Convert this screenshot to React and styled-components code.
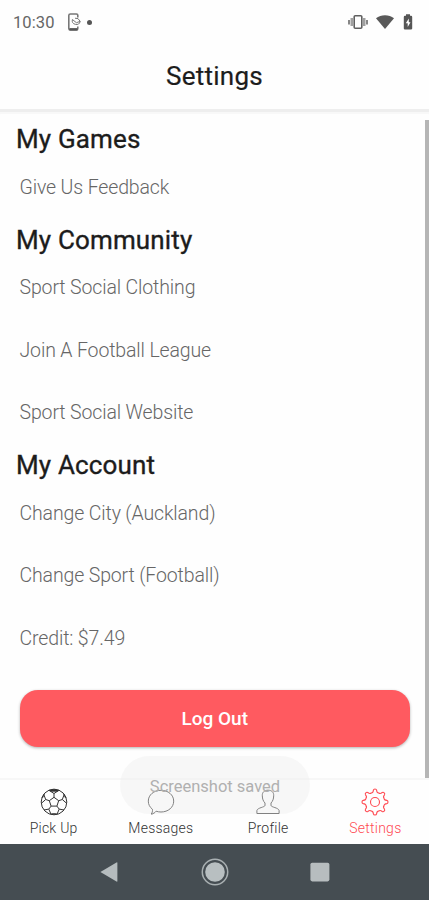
import React, { useState } from "react";
import styled, { createGlobalStyle } from "styled-components";

const sections = [
  { title: "My Games", items: ["Give Us Feedback"] },
  {
    title: "My Community",
    items: ["Sport Social Clothing", "Join A Football League", "Sport Social Website"],
  },
  {
    title: "My Account",
    items: ["Change City (Auckland)", "Change Sport (Football)", "Credit: $7.49"],
  },
];

const BallIcon = () => (
  <svg width="28" height="28" viewBox="0 0 28 28" fill="none" stroke="currentColor" strokeWidth="1">
    <circle cx="14" cy="14" r="12.8" />
    <path d="M14 9.3L18.7 12.7L16.9 18.1H11.1L9.3 12.7Z" />
    <path d="M14 9.3V5.5M18.7 12.7L22.3 11.5M16.9 18.1L19.2 21.1M11.1 18.1L8.8 21.1M9.3 12.7L5.7 11.5" />
    <path d="M9.1 2.4L14 5.5L18.9 2.4M24.2 6.5L22.3 11.5L26.5 15.2M24 22L19.2 21.1L17 26.3M11 26.3L8.8 21.1L4 22M1.5 15.2L5.7 11.5L3.8 6.5" />
    <path d="M9.2 2.4L12 1.4H16L18.8 2.4L17 3.4H11ZM23.7 5.8L26 9.5L25 9.5ZM4.3 5.8L2 9.5L3 9.5ZM10.8 26.2H17.2L15.5 25.5H12.5Z" fill="currentColor" strokeWidth="0.5" />
  </svg>
);

const BubbleIcon = () => (
  <svg width="28" height="28" viewBox="0 0 28 28" fill="none" stroke="currentColor" strokeWidth="1">
    <path d="M14 2.3C21.2 2.3 26.7 7 26.7 13.1C26.7 19.3 21.2 24 14 24C12.2 24 10.6 23.7 9.1 23.2C8 24.7 6.4 25.8 4.2 26C5.3 24.7 5.7 23.3 5.4 21.2C2.8 19.2 1.3 16.4 1.3 13.1C1.3 7 6.8 2.3 14 2.3Z" />
  </svg>
);

const PersonIcon = () => (
  <svg width="28" height="28" viewBox="0 0 28 28" fill="none" stroke="currentColor" strokeWidth="1">
    <path d="M14 2.2C17.7 2.2 19.9 4.3 19.7 7.8C19.6 10.9 18.8 13.2 17 15V17.4C17 19.2 24.6 19.7 25.1 22.5V25.5H2.9V22.5C3.4 19.7 11 19.2 11 17.4V15C9.2 13.2 8.4 10.9 8.3 7.8C8.1 4.3 10.3 2.2 14 2.2Z" />
  </svg>
);

const GearIcon = () => (
  <svg width="28" height="28" viewBox="0 0 28 28" fill="none" stroke="currentColor" strokeWidth="1.1" strokeLinejoin="round">
    {[0, 45, 90, 135, 180, 225, 270, 315].map((angle) => (
      <path
        key={angle}
        d="M10.2 4.9C11.9 5 12.2 4 12.4 2.2Q12.6 1 14 1Q15.4 1 15.6 2.2C15.8 4 16.1 5 17.8 4.9"
        transform={`rotate(${angle} 14 14)`}
      />
    ))}
    <circle cx="14" cy="14" r="4.5" />
  </svg>
);

const tabs = [
  { label: "Pick Up", icon: BallIcon },
  { label: "Messages", icon: BubbleIcon },
  { label: "Profile", icon: PersonIcon },
  { label: "Settings", icon: GearIcon },
];

const App = () => {
  const [activeTab, setActiveTab] = useState("Settings");

  return (
    <Screen>
      <GlobalStyle />
      <StatusBar>
        <StatusGroup>
          <Clock>10:30</Clock>
          <svg width="15" height="19" viewBox="0 0 15 19" fill="none" stroke="#777" strokeWidth="1.6">
            <path d="M10.8 4.5V2.2Q10.8 1 9.5 1H3.4Q1.8 1 1.8 2.5V15.5Q1.8 17 3.4 17H9.5Q10.8 17 10.8 15.5V13.5" />
            <path d="M2.4 16.3H10.5" stroke="#555" strokeWidth="2.4" />
            <path d="M5.4 6.5A4 4 0 1 0 13.2 8.4M5.4 6.5L9.4 9.7L13.2 8.4M8 5.2Q11.4 4.4 13.2 8.4" strokeWidth="1" />
          </svg>
          <Dot />
        </StatusGroup>
        <StatusIcons>
          <svg width="20" height="16" viewBox="0 0 20 16" fill="none" stroke="#606060">
            <rect x="6.2" y="1.7" width="7.6" height="12.6" rx="1" strokeWidth="1.6" />
            <path d="M3.8 4V12M16.2 4V12" strokeWidth="2.6" stroke="#a0a0a0" />
            <path d="M1 6V10.5M19 6V10.5" strokeWidth="1.5" />
          </svg>
          <svg width="20" height="16" viewBox="0 0 20 16" fill="#595959">
            <path d="M1 4.2C6 .2 14 .2 19 4.2L10 15Z" />
          </svg>
          <svg width="10" height="16" viewBox="0 0 10 16" fill="#555">
            <path d="M3 .3H7V1.8H8Q9.2 1.8 9.2 3V14.4Q9.2 15.5 8 15.5H2Q.8 15.5 .8 14.4V3Q.8 1.8 2 1.8H3Z" />
            <path d="M5.8 4.5L2.8 9.2H4.7V13L7.5 8.2H5.8Z" fill="#fff" />
          </svg>
        </StatusIcons>
      </StatusBar>
      <Header>Settings</Header>
      <Content>
        <List>
          {sections.map((section) => (
            <section key={section.title}>
              <SectionTitle>{section.title}</SectionTitle>
              {section.items.map((item) => (
                <Item key={item}>{item}</Item>
              ))}
            </section>
          ))}
          <LogOutButton>Log Out</LogOutButton>
        </List>
        <ScrollThumb />
      </Content>
      <TabBar>
        {tabs.map(({ label, icon: Icon }) => (
          <Tab key={label} $active={label === activeTab} onClick={() => setActiveTab(label)}>
            <Icon />
            <span>{label}</span>
          </Tab>
        ))}
      </TabBar>
      <NavBar>
        <svg width="28" height="28" viewBox="0 0 28 28" fill="#b5bcbe">
          <path d="M4.4 14L20.5 4.5Q21.4 4 21.4 5V23Q21.4 24 20.5 23.5Z" />
        </svg>
        <svg width="28" height="28" viewBox="0 0 28 28">
          <circle cx="14" cy="14" r="12.7" fill="none" stroke="#a9b0b2" strokeWidth="1.5" />
          <circle cx="14" cy="14" r="9.8" fill="#b8bfc1" />
        </svg>
        <svg width="28" height="28" viewBox="0 0 28 28">
          <rect x="4.4" y="4.7" width="19" height="18.7" rx="1.8" fill="#b7bdbf" />
        </svg>
      </NavBar>
      <Toast>Screenshot saved</Toast>
    </Screen>
  );
};

export default App;

// Styled Components
const GlobalStyle = createGlobalStyle`
  body {
    margin: 0;
    background: #fff;
  }

  * {
    box-sizing: border-box;
  }
`;

const Screen = styled.div`
  position: relative;
  display: flex;
  flex-direction: column;
  width: 429px;
  height: 900px;
  overflow: hidden;
  background: #fefefe;
  font-family: Roboto, sans-serif;
`;

const StatusBar = styled.div`
  display: flex;
  align-items: center;
  justify-content: space-between;
  height: 44px;
  padding: 0 16px 0 13px;
`;

const StatusGroup = styled.div`
  display: flex;
  align-items: center;
`;

const Clock = styled.span`
  width: 54px;
  font-size: 16.5px;
  letter-spacing: 0.1px;
  color: #666;
`;

const Dot = styled.span`
  width: 5px;
  height: 5px;
  margin-left: 5px;
  border-radius: 50%;
  background: #555;
`;

const StatusIcons = styled.div`
  display: flex;
  align-items: center;
  gap: 8px;

  svg:first-child {
    margin-right: -1px;
  }
`;

const Header = styled.header`
  display: flex;
  align-items: center;
  justify-content: center;
  height: 65px;
  flex-shrink: 0;
  padding-bottom: 2px;
  font-size: 26px;
  font-weight: 400;
  letter-spacing: 0.25px;
  color: #1c1c1c;
  -webkit-text-stroke: 0.2px #1c1c1c;
`;

const Content = styled.main`
  display: flex;
  height: 669px;
  flex-shrink: 0;
  border-top: 3px solid #eeeeee;
  box-shadow: inset 0 2px 1px #f8f8f8;
`;

const List = styled.div`
  flex: 1;
  min-width: 0;
  padding: 5.5px 15px 0 16px;
`;

const SectionTitle = styled.h2`
  height: 38px;
  margin: 0;
  padding-top: 2.5px;
  font-size: 26px;
  font-weight: 400;
  line-height: 38px;
  letter-spacing: 0.15px;
  color: #1c1c1c;
  -webkit-text-stroke: 0.35px #1c1c1c;
`;

const Item = styled.div`
  height: 62.5px;
  padding-left: 3.5px;
  font-size: 19.5px;
  font-weight: 300;
  line-height: 63px;
  letter-spacing: -0.14px;
  color: #666;
`;

const LogOutButton = styled.button`
  display: block;
  width: 390.5px;
  height: 57px;
  margin: 21px 0 0 3.5px;
  border: none;
  border-radius: 18px;
  background: #ff5a60;
  box-shadow: 0 1px 3px rgba(0, 0, 0, 0.3);
  font-family: inherit;
  font-size: 19px;
  font-weight: 500;
  color: #fff;
`;

const ScrollThumb = styled.div`
  width: 4px;
  height: 658px;
  flex-shrink: 0;
  margin-top: 8px;
  background: #b5b5b5;
`;

const TabBar = styled.nav`
  display: grid;
  grid-template-columns: repeat(4, 1fr);
  height: 66px;
  flex-shrink: 0;
  border-top: 2px solid #f7f7f7;
  background: #fefefe;
`;

const Tab = styled.button`
  display: flex;
  flex-direction: column;
  align-items: center;
  padding: 8px 0 0;
  border: none;
  background: none;
  font-family: inherit;
  font-size: 14px;
  font-weight: 300;
  line-height: 16px;
  letter-spacing: 0.25px;
  color: ${({ $active }) => ($active ? "#ff4a52" : "#333")};

  span {
    margin-top: 4px;
  }
`;

const NavBar = styled.div`
  display: flex;
  align-items: center;
  justify-content: center;
  gap: 77px;
  height: 56px;
  flex-shrink: 0;
  background: #454d52;
`;

const Toast = styled.div`
  position: absolute;
  top: 756px;
  left: 120px;
  width: 190px;
  height: 58px;
  border-radius: 29px;
  background: rgba(238, 238, 238, 0.42);
  font-size: 16.5px;
  line-height: 61px;
  text-align: center;
  color: #b0b0b0;
  pointer-events: none;
`;
